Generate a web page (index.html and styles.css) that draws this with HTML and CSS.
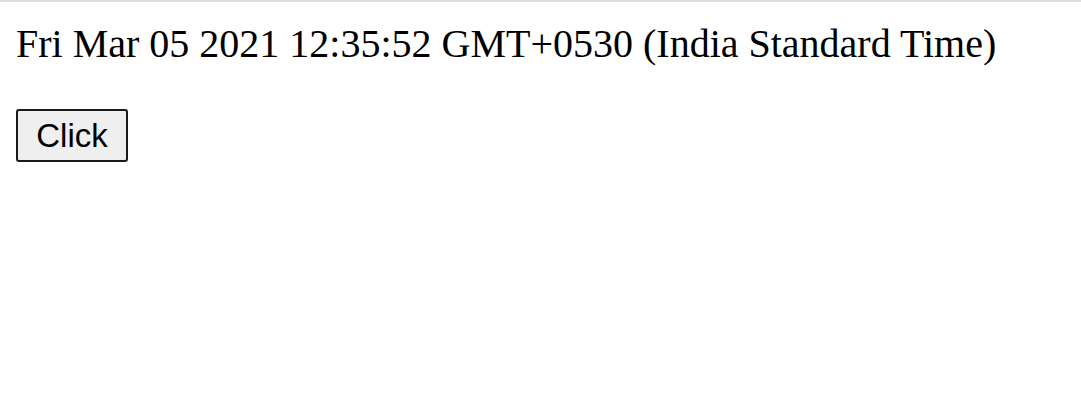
FILE: index.html
```html
<!DOCTYPE html>
<html>
<head>
<meta charset="utf-8">
<link rel="stylesheet" href="styles.css">
</head>
<body>
<div class="topbar"></div>
<div class="page">
  <p class="date">Fri Mar 05 2021 12:35:52 GMT+0530 (India Standard Time)</p>
  <button class="btn">Click</button>
</div>
</body>
</html>
```
FILE: styles.css
```css
html, body {
  margin: 0;
  padding: 0;
  background: #ffffff;
}
.topbar {
  height: 2px;
  background: #dedede;
}
.page {
  padding: 0 16px;
  font-family: "Liberation Serif", serif;
}
.date {
  margin: 19px 0 0 0;
  font-size: 40px;
  line-height: 46px;
  color: #000;
}
.btn {
  display: block;
  margin-top: 42px;
  font-family: "Liberation Sans", Arial, sans-serif;
  font-size: 33px;
  color: #000;
  background: #efefef;
  border: 2px solid #1a1a1a;
  border-radius: 3px;
  width: 112px;
  height: 53px;
  padding: 0;
}
```
